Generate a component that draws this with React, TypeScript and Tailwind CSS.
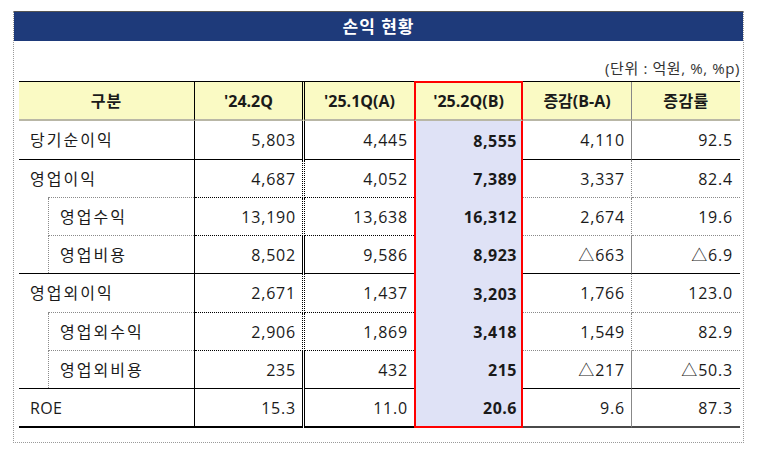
import React from "react";

type Row = {
  label: string;
  values: string[];
  kind: "top" | "parent" | "sub" | "subLast";
  bottom: "solid" | "dotted" | "end";
  h: string;
};

const rows: Row[] = [
  { label: "당기순이익", values: ["5,803", "4,445", "8,555", "4,110", "92.5"], kind: "top", bottom: "solid", h: "h-[39px]" },
  { label: "영업이익", values: ["4,687", "4,052", "7,389", "3,337", "82.4"], kind: "parent", bottom: "dotted", h: "h-[38px]" },
  { label: "영업수익", values: ["13,190", "13,638", "16,312", "2,674", "19.6"], kind: "sub", bottom: "dotted", h: "h-[38px]" },
  { label: "영업비용", values: ["8,502", "9,586", "8,923", "△663", "△6.9"], kind: "subLast", bottom: "solid", h: "h-[38px]" },
  { label: "영업외이익", values: ["2,671", "1,437", "3,203", "1,766", "123.0"], kind: "parent", bottom: "dotted", h: "h-[39px]" },
  { label: "영업외수익", values: ["2,906", "1,869", "3,418", "1,549", "82.9"], kind: "sub", bottom: "dotted", h: "h-[38px]" },
  { label: "영업외비용", values: ["235", "432", "215", "△217", "△50.3"], kind: "subLast", bottom: "solid", h: "h-[38px]" },
  { label: "ROE", values: ["15.3", "11.0", "20.6", "9.6", "87.3"], kind: "top", bottom: "end", h: "h-[39px]" },
];

const font = { fontFamily: '"Open Sans", "Noto Sans CJK KR", sans-serif' };

function bottomClass(b: Row["bottom"]) {
  if (b === "solid") return "border-b border-black";
  if (b === "dotted") return "border-b border-dotted border-[#8a8a8a]";
  return "border-b-2 border-[#4a4a4a]";
}

function LabelCell({ row }: { row: Row }) {
  const isSub = row.kind === "sub" || row.kind === "subLast";
  const track = row.label === "ROE" ? "tracking-[0.3px]" : "tracking-[2px]";
  // dotted rule below parent / sub rows starts at the indent line
  const outerBottom = row.bottom === "dotted" ? "" : bottomClass(row.bottom);
  return (
    <div className={`w-[176px] border-r border-black flex flex-col ${outerBottom}`}>
      {isSub ? (
        <div className="flex-1 pl-[29px] flex flex-col">
          <div
            className={`flex-1 border-l border-dotted border-[#8a8a8a] flex items-center pl-[11px] ${track} ${
              row.bottom === "dotted" ? "border-b" : ""
            }`}
          >
            {row.label}
          </div>
        </div>
      ) : (
        <>
          <div className={`flex-1 flex items-center pl-[11px] ${track}`}>{row.label}</div>
          {row.bottom === "dotted" && <div className="ml-[29px] border-b border-dotted border-[#8a8a8a]" />}
        </>
      )}
    </div>
  );
}

export default function App() {
  return (
    <div className="w-[758px] h-[456px] bg-white text-[#1a1a1a] pt-[11px] pl-[13px]" style={font}>
      <div className="w-[731px] h-[432px] border-x border-b border-dotted border-[#9a9a9a] flex flex-col">
        <div className="h-[30px] bg-[#1e3a7a] border-t border-[#555] flex items-center justify-center text-white font-bold text-[17px] tracking-[1px]">
          손익 현황
        </div>
        <div className="h-[40px] flex items-end justify-end pr-[3px] pb-[2px] text-[15px] text-[#333] tracking-[0.6px]">
          (단위 : 억원, %, %p)
        </div>

        {/* table */}
        <div className="ml-[5px] w-[721px] text-[16px]">
          {/* header */}
          <div className="flex h-[40px] bg-[#fafac4] border-t border-black font-bold text-[16px]">
            <div className="w-[176px] border-r border-black border-b-2 border-b-[#b9b7a6] flex items-center justify-center tracking-[1px]">
              구분
            </div>
            <div className="w-[108px] border-r border-black border-b-2 border-b-[#b9b7a6] flex items-center justify-center">
              '24.2Q
            </div>
            <div className="w-[110px] border-l border-black ml-[1px] border-b-2 border-b-[#b9b7a6] flex items-center justify-center">
              '25.1Q(A)
            </div>
            <div className="w-[109px] -mt-px border-2 border-[#ff0000] border-b-[#b9b7a6] flex items-center justify-center">
              '25.2Q(B)
            </div>
            <div className="w-[109px] border-r border-[#888] border-b-2 border-b-[#b9b7a6] flex items-center justify-center">
              증감(B-A)
            </div>
            <div className="w-[108px] border-b-2 border-b-[#b9b7a6] flex items-center justify-center tracking-[0.5px]">
              증감률
            </div>
          </div>

          {rows.map((row, i) => {
            const b = bottomClass(row.bottom);
            const last = i === rows.length - 1;
            return (
              <div key={row.label} className={`flex ${row.h}`}>
                <LabelCell row={row} />
                <div className={`w-[108px] border-r border-black flex items-center justify-end pr-[6px] tracking-[0.8px] ${b}`}>
                  {row.values[0]}
                </div>
                <div className={`w-[110px] border-l border-black ml-[1px] flex items-center justify-end pr-[6px] tracking-[0.8px] ${b}`}>
                  {row.values[1]}
                </div>
                <div
                  className={`w-[109px] bg-[#dfe2f6] border-x-2 border-[#ff0000] flex items-center justify-end pr-[4px] font-bold tracking-[0.5px] ${
                    last ? "border-b-2" : ""
                  }`}
                >
                  {row.values[2]}
                </div>
                <div className={`w-[109px] border-r border-r-[#888] flex items-center justify-end pr-[6px] tracking-[0.8px] ${b}`}>
                  {row.values[3]}
                </div>
                <div className={`w-[108px] flex items-center justify-end pr-[7px] tracking-[0.8px] ${b}`}>
                  {row.values[4]}
                </div>
              </div>
            );
          })}
        </div>
      </div>
    </div>
  );
}
